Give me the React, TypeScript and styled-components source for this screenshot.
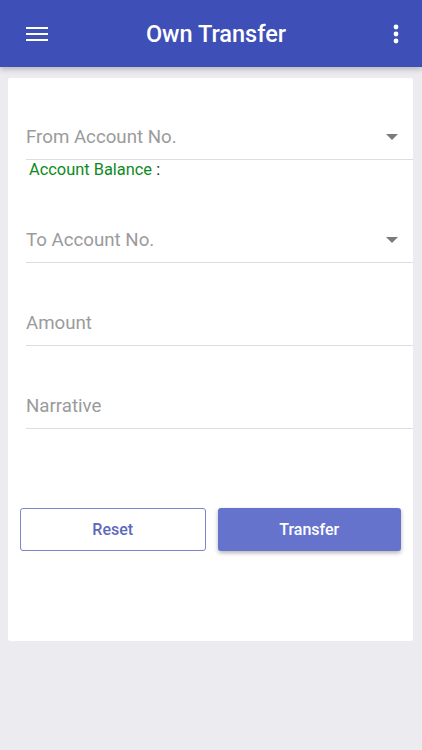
import React from "react";
import styled, { createGlobalStyle } from "styled-components";

const GlobalStyle = createGlobalStyle`
  body {
    margin: 0;
    background: #ecebf0;
    font-family: Roboto, "Noto Sans", sans-serif;
  }
`;

const Page = styled.div`
  min-height: 750px;
  background: #ecebf0;
`;

const Header = styled.header`
  height: 67px;
  background: #3e4fb7;
  display: flex;
  align-items: center;
  justify-content: space-between;
  padding: 0 23px 0 26px;
  box-shadow: 0 2px 6px rgba(0, 0, 0, 0.25);
  position: relative;
`;

const Title = styled.h1`
  margin: 0;
  position: absolute;
  left: 0;
  right: 0;
  padding-left: 10px;
  text-align: center;
  color: #fff;
  font-size: 23.5px;
  font-weight: 500;
  pointer-events: none;
`;

const IconButton = styled.span`
  display: flex;
  align-items: center;
  justify-content: center;
  color: #fff;
`;

const Card = styled.main`
  margin: 11px 9px 0 8px;
  height: 563px;
  background: #fff;
  border-radius: 2px;
  display: flex;
  flex-direction: column;
`;

const Form = styled.div`
  padding: 37px 0 0 18px;
  display: flex;
  flex-direction: column;
`;

const Field = styled.div<{ $gap?: number }>`
  height: 44px;
  margin-top: ${(p) => p.$gap ?? 0}px;
  display: flex;
  align-items: center;
  justify-content: space-between;
  padding-right: 15px;
  border-bottom: 1px solid #dedede;
  color: #9b9b9b;
  font-size: 18.7px;
`;

const Caret = styled.span`
  width: 0;
  height: 0;
  border-left: 6px solid transparent;
  border-right: 6px solid transparent;
  border-top: 6px solid #7a7a7a;
`;

const Balance = styled.div`
  margin-left: 3px;
  line-height: 20px;
  font-size: 16.4px;
  color: #0d8a22;

  span {
    color: #222;
  }
`;

const Buttons = styled.div`
  margin-top: 79px;
  padding: 0 12px;
  display: flex;
  gap: 12px;
`;

const Button = styled.button<{ $primary?: boolean }>`
  flex: 1;
  height: 43px;
  border-radius: 3px;
  font-family: Roboto, "Noto Sans", sans-serif;
  font-size: 16px;
  font-weight: 500;
  cursor: pointer;
  border: ${(p) => (p.$primary ? "none" : "1.5px solid #7d84c8")};
  background: ${(p) => (p.$primary ? "#6673cc" : "#fff")};
  color: ${(p) => (p.$primary ? "#fff" : "#5c69bd")};
  box-shadow: ${(p) => (p.$primary ? "0 2px 4px rgba(0,0,0,0.3)" : "none")};
`;

const Menu = () => (
  <svg width="22" height="16" viewBox="0 0 22 16">
    <rect x="0" y="1" width="22" height="2" fill="#fff" />
    <rect x="0" y="7" width="22" height="2" fill="#fff" />
    <rect x="0" y="13" width="22" height="2" fill="#fff" />
  </svg>
);

const Dots = () => (
  <svg width="6" height="20" viewBox="0 0 6 20">
    <circle cx="3" cy="3" r="2.4" fill="#fff" />
    <circle cx="3" cy="10" r="2.4" fill="#fff" />
    <circle cx="3" cy="17" r="2.4" fill="#fff" />
  </svg>
);

export default function App() {
  return (
    <Page>
      <GlobalStyle />
      <Header>
        <IconButton>
          <Menu />
        </IconButton>
        <Title>Own Transfer</Title>
        <IconButton>
          <Dots />
        </IconButton>
      </Header>
      <Card>
        <Form>
          <Field>
            From Account No.
            <Caret />
          </Field>
          <Balance>
            Account Balance <span>:</span>
          </Balance>
          <Field $gap={38}>
            To Account No.
            <Caret />
          </Field>
          <Field $gap={38}>Amount</Field>
          <Field $gap={38}>Narrative</Field>
        </Form>
        <Buttons>
          <Button>Reset</Button>
          <Button $primary>Transfer</Button>
        </Buttons>
      </Card>
    </Page>
  );
}
